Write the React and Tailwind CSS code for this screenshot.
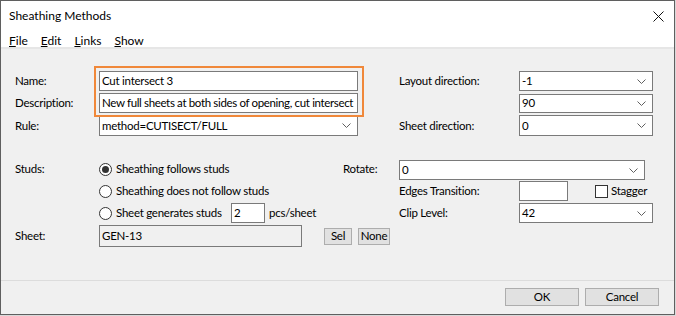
import React from "react";

const Chevron = () => (
  <svg width="9" height="5" viewBox="0 0 9 5" className="shrink-0">
    <polyline points="0.5,0.5 4.5,4.5 8.5,0.5" fill="none" stroke="#606060" strokeWidth="1" />
  </svg>
);

const Combo = ({ value, className }) => (
  <div className={`flex items-center justify-between bg-white border border-[#7a7a7a] pl-[2px] pr-[6px] ${className}`}>
    <span className="leading-none">{value}</span>
    <Chevron />
  </div>
);

const TextBox = ({ value, className, textClass = "" }) => (
  <div className={`flex items-center bg-white border border-[#7a7a7a] pl-[2px] ${className}`}>
    <span className={`leading-none whitespace-nowrap ${textClass}`}>{value}</span>
  </div>
);

const Radio = ({ checked }) => (
  <span className="w-[13px] h-[13px] rounded-full border border-[#333] bg-white flex items-center justify-center shrink-0">
    {checked && <span className="w-[7px] h-[7px] rounded-full bg-[#333]" />}
  </span>
);

const Button = ({ children, className }) => (
  <div className={`flex items-center justify-center bg-[#e1e1e1] border border-[#adadad] ${className}`}>
    {children}
  </div>
);

const Menu = ({ label }) => (
  <span>
    <span className="underline underline-offset-1">{label[0]}</span>
    {label.slice(1)}
  </span>
);

export default function App() {
  return (
    <div
      className="w-[676px] h-[316px] bg-[#d9d9d9] text-black text-[11.5px] tracking-[-0.25px] whitespace-nowrap"
      style={{ fontFamily: "Lato, 'Liberation Sans', sans-serif" }}
    >
      <div className="w-[675px] h-[315px] border border-[#5f5f5f] flex flex-col bg-[#f0f0f0]">
        {/* title bar */}
        <div className="h-[29px] bg-white flex items-center justify-between pl-[8px] pr-[10px] pt-[1px] text-[12px] tracking-normal">
          <span>Sheathing Methods</span>
          <svg width="11" height="11" viewBox="0 0 11 11">
            <path d="M0.5 0.5 L10.5 10.5 M10.5 0.5 L0.5 10.5" stroke="#111" strokeWidth="1" />
          </svg>
        </div>
        {/* menu bar */}
        <div className="h-[19px] bg-white flex items-center gap-[13px] pl-[8px] pt-[4px] border-b-2 border-[#e6e6e6] text-[12px] tracking-normal">
          <Menu label="File" />
          <Menu label="Edit" />
          <Menu label="Links" />
          <Menu label="Show" />
        </div>

        {/* content */}
        <div className="flex-1 relative pl-[14px] pt-[22px]">
          {/* top block */}
          <div className="flex flex-col gap-[2px]">
            <div className="flex items-center h-[20px]">
              <span className="w-[84px]">Name:</span>
              <TextBox value="Cut intersect 3" className="w-[259px] h-[20px]" />
              <span className="w-[120px] ml-[41px]">Layout direction:</span>
              <Combo value="-1" className="w-[134px] h-[20px]" />
            </div>
            <div className="flex items-center h-[20px]">
              <span className="w-[84px]">Description:</span>
              <TextBox
                value="New full sheets at both sides of opening, cut intersect"
                className="w-[259px] h-[20px] overflow-hidden"
                textClass="tracking-[-0.35px]"
              />
              <span className="w-[120px] ml-[41px]"></span>
              <Combo value="90" className="w-[134px] h-[19px]" />
            </div>
            <div className="flex items-center h-[21px]">
              <span className="w-[84px]">Rule:</span>
              <Combo value="method=CUTISECT/FULL" className="w-[259px] h-[21px]" />
              <span className="w-[120px] ml-[41px]">Sheet direction:</span>
              <Combo value="0" className="w-[134px] h-[21px]" />
            </div>
          </div>

          {/* studs block */}
          <div className="flex flex-col mt-[22px]">
            <div className="flex items-center h-[22px]">
              <span className="w-[84px]">Studs:</span>
              <div className="w-[244px] flex items-center gap-[4px]">
                <Radio checked />
                <span>Sheathing follows studs</span>
              </div>
              <span className="w-[56px]">Rotate:</span>
              <Combo value="0" className="w-[246px] h-[20px] mt-[2px]" />
            </div>
            <div className="flex items-center h-[22px]">
              <span className="w-[84px]"></span>
              <div className="w-[300px] flex items-center gap-[4px]">
                <Radio />
                <span>Sheathing does not follow studs</span>
              </div>
              <span className="w-[120px]">Edges Transition:</span>
              <TextBox value="" className="w-[49px] h-[20px]" />
              <span className="w-[13px] h-[13px] border border-[#333] bg-white ml-[27px]" />
              <span className="ml-[3px]">Stagger</span>
            </div>
            <div className="flex items-center h-[22px]">
              <span className="w-[84px]"></span>
              <div className="w-[300px] flex items-center">
                <div className="w-[132px] flex items-center gap-[4px]">
                  <Radio />
                  <span>Sheet generates studs</span>
                </div>
                <TextBox value="2" className="w-[34px] h-[20px]" />
                <span className="ml-[4px]">pcs/sheet</span>
              </div>
              <span className="w-[120px]">Clip Level:</span>
              <Combo value="42" className="w-[134px] h-[20px]" />
            </div>
            <div className="flex items-center h-[22px] mt-[1px]">
              <span className="w-[84px]">Sheet:</span>
              <div className="w-[203px] h-[22px] flex items-center border border-[#7a7a7a] bg-[#f0f0f0] pl-[2px]">
                GEN-13
              </div>
              <Button className="w-[28px] h-[17px] ml-[22px]">Sel</Button>
              <Button className="w-[32px] h-[17px] ml-[6px]">None</Button>
            </div>
          </div>

          {/* highlight annotation */}
          <div className="absolute left-[93px] top-[17px] w-[270px] h-[51px] border-2 border-[#f0883a] pointer-events-none" />
        </div>

        {/* footer */}
        <div className="h-[34px] border-t border-[#dcdcdc] flex justify-end items-start gap-[6px] pt-[7px] pr-[15px]">
          <Button className="w-[74px] h-[18px]">OK</Button>
          <Button className="w-[74px] h-[18px]">Cancel</Button>
        </div>
      </div>
    </div>
  );
}
